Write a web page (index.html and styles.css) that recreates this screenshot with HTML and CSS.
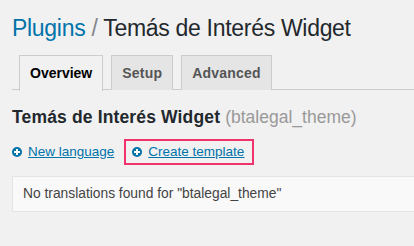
FILE: index.html
```html
<!DOCTYPE html>
<html>
<head>
<meta charset="utf-8">
<link rel="stylesheet" href="styles.css">
</head>
<body>
<div class="wrap">
  <h1 class="title"><a class="crumb" href="#">Plugins</a> <span class="sep">/</span> Temás de Interés Widget</h1>
  <nav class="tabs">
    <a class="tab active" href="#">Overview</a>
    <a class="tab" href="#">Setup</a>
    <a class="tab" href="#">Advanced</a>
  </nav>
  <h2 class="subtitle">Temás de Interés Widget <span class="slug">(btalegal_theme)</span></h2>
  <div class="actions">
    <a class="action" href="#"><span class="plus"></span><span class="label">New language</span></a>
    <a class="action highlight" href="#"><span class="plus"></span><span class="label">Create template</span></a>
  </div>
  <div class="notice">No translations found for "btalegal_theme"</div>
</div>
</body>
</html>
```
FILE: styles.css
```css
html, body {
  margin: 0;
  padding: 0;
  background: #f1f1f1;
  font-family: "Liberation Sans", Arial, sans-serif;
  color: #23282d;
}
.wrap {
  padding: 13px 0 0 12px;
}
.title {
  margin: 0;
  font-size: 23px;
  font-weight: 400;
  line-height: 30px;
  letter-spacing: -0.3px;
  color: #23282d;
}
.crumb {
  color: #0073aa;
  text-decoration: none;
}
.sep {
  color: #82878c;
}
.tabs {
  margin-top: 12px;
  display: flex;
  border-bottom: 1px solid #ccc;
  height: 34px;
}
.tab {
  margin-left: 7px;
  padding: 5px 10px;
  font-size: 14px;
  line-height: 24px;
  font-weight: 700;
  letter-spacing: 0.2px;
  color: #555;
  background: #e5e5e5;
  border: 1px solid #ccc;
  border-bottom: none;
  text-decoration: none;
  height: 24px;
}
.tab + .tab {
  margin-left: 8px;
}
.tab.active {
  background: #f1f1f1;
  color: #000;
  height: 25px;
  letter-spacing: 0;
}
.subtitle {
  margin: 16px 0 0;
  font-size: 17.5px;
  line-height: 22px;
  font-weight: 700;
  letter-spacing: 0.15px;
  color: #23282d;
}
.slug {
  font-weight: 400;
  color: #999;
  letter-spacing: 0;
}
.actions {
  margin-top: 11px;
  display: flex;
  align-items: center;
  gap: 10px;
}
.action {
  display: flex;
  align-items: center;
  gap: 6px;
  color: #0073aa;
  text-decoration: none;
  font-size: 13.5px;
  line-height: 20px;
  padding: 2px 0;
}
.action .label {
  text-decoration: underline;
}
.highlight {
  border: 2px solid #f0326d;
  padding: 1px 8px 1px 6px;
}
.plus {
  width: 10px;
  height: 10px;
  border-radius: 50%;
  background: #0073aa;
  position: relative;
  flex: none;
}
.plus::before, .plus::after {
  content: "";
  position: absolute;
  background: #fff;
}
.plus::before {
  left: 2px; right: 2px; top: 4px; height: 2px;
}
.plus::after {
  top: 2px; bottom: 2px; left: 4px; width: 2px;
}
.notice {
  margin-top: 11px;
  background: #f9f9f9;
  border: 1px solid #e5e5e5;
  border-right: none;
  box-shadow: 0 1px 1px rgba(0,0,0,.04);
  padding: 0 11px 0 10px;
  height: 34px;
  line-height: 34px;
  font-size: 13.8px;
  color: #444;
}
```
